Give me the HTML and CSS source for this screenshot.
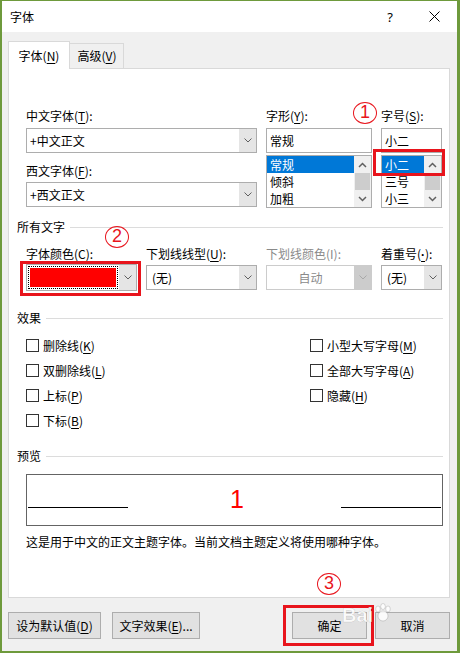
FILE: index.html
```html
<!DOCTYPE html>
<html lang="zh-CN">
<head>
<meta charset="utf-8">
<title>字体</title>
<link rel="stylesheet" href="styles.css">
</head>
<body>
<div class="window">
  <div class="titlebar">
    <span class="title">字体</span>
    <span class="help">?</span>
    <svg class="close" width="11" height="11" viewBox="0 0 11 11"><path d="M0.5 0.5 L10.5 10.5 M10.5 0.5 L0.5 10.5" stroke="#000" stroke-width="1" fill="none"/></svg>
  </div>

  <div class="main">
    <div class="tabs">
      <div class="tab active">字体(<u>N</u>)</div>
      <div class="tab">高级(<u>V</u>)</div>
    </div>

    <div class="panel">
      <div class="fontgrid">
        <div class="col">
          <div class="field">
            <div class="lbl">中文字体(<u>T</u>):</div>
            <div class="combo"><span class="val">+中文正文</span><span class="drop"><svg width="8" height="5" viewBox="0 0 8 5"><path d="M0.5 0.5 L4 4 L7.5 0.5" fill="none" stroke="#606060"/></svg></span></div>
          </div>
          <div class="field second">
            <div class="lbl">西文字体(<u>F</u>):</div>
            <div class="combo"><span class="val">+西文正文</span><span class="drop"><svg width="8" height="5" viewBox="0 0 8 5"><path d="M0.5 0.5 L4 4 L7.5 0.5" fill="none" stroke="#606060"/></svg></span></div>
          </div>
        </div>
        <div class="col">
          <div class="lbl">字形(<u>Y</u>):</div>
          <div class="textbox">常规</div>
          <div class="list">
            <div class="items">
              <div class="item sel">常规</div>
              <div class="item">倾斜</div>
              <div class="item">加粗</div>
            </div>
            <div class="scroll">
              <span class="arrow"><svg width="9" height="6" viewBox="0 0 9 6"><path d="M1 5 L4.5 1.5 L8 5" fill="none" stroke="#606060" stroke-width="1.5"/></svg></span>
              <span class="thumb"></span>
              <span class="arrow"><svg width="9" height="6" viewBox="0 0 9 6"><path d="M1 1 L4.5 4.5 L8 1" fill="none" stroke="#606060" stroke-width="1.5"/></svg></span>
            </div>
          </div>
        </div>
        <div class="col">
          <div class="lbl">字号(<u>S</u>):</div>
          <div class="textbox">小二</div>
          <div class="list">
            <div class="items">
              <div class="item sel">小二</div>
              <div class="item">三号</div>
              <div class="item">小三</div>
            </div>
            <div class="scroll">
              <span class="arrow"><svg width="9" height="6" viewBox="0 0 9 6"><path d="M1 5 L4.5 1.5 L8 5" fill="none" stroke="#606060" stroke-width="1.5"/></svg></span>
              <span class="thumb"></span>
              <span class="arrow"><svg width="9" height="6" viewBox="0 0 9 6"><path d="M1 1 L4.5 4.5 L8 1" fill="none" stroke="#606060" stroke-width="1.5"/></svg></span>
            </div>
          </div>
        </div>
      </div>

      <div class="section">所有文字</div>
      <div class="attrgrid">
        <div class="field">
          <div class="lbl">字体颜色(<u>C</u>):</div>
          <div class="combo color">
            <span class="focus"><span class="swatch"></span></span>
            <span class="drop"><svg width="8" height="5" viewBox="0 0 8 5"><path d="M0.5 0.5 L4 4 L7.5 0.5" fill="none" stroke="#606060"/></svg></span>
          </div>
        </div>
        <div class="field">
          <div class="lbl">下划线线型(<u>U</u>):</div>
          <div class="combo"><span class="val pad">(无)</span><span class="drop"><svg width="8" height="5" viewBox="0 0 8 5"><path d="M0.5 0.5 L4 4 L7.5 0.5" fill="none" stroke="#606060"/></svg></span></div>
        </div>
        <div class="field">
          <div class="lbl disabled">下划线颜色(I):</div>
          <div class="combo off"><span class="val center">自动</span><span class="drop"><svg width="8" height="5" viewBox="0 0 8 5"><path d="M0.5 0.5 L4 4 L7.5 0.5" fill="none" stroke="#a8a8a8"/></svg></span></div>
        </div>
        <div class="field">
          <div class="lbl">着重号(<u class="dot">·</u>):</div>
          <div class="combo"><span class="val pad">(无)</span><span class="drop"><svg width="8" height="5" viewBox="0 0 8 5"><path d="M0.5 0.5 L4 4 L7.5 0.5" fill="none" stroke="#606060"/></svg></span></div>
        </div>
      </div>

      <div class="section effects-title">效果</div>
      <div class="effects">
        <div class="checks">
          <label class="check"><span class="box"></span><span>删除线(<u>K</u>)</span></label>
          <label class="check"><span class="box"></span><span>双删除线(<u>L</u>)</span></label>
          <label class="check"><span class="box"></span><span>上标(<u>P</u>)</span></label>
          <label class="check"><span class="box"></span><span>下标(<u>B</u>)</span></label>
        </div>
        <div class="checks">
          <label class="check"><span class="box"></span><span>小型大写字母(<u>M</u>)</span></label>
          <label class="check"><span class="box"></span><span>全部大写字母(<u>A</u>)</span></label>
          <label class="check"><span class="box"></span><span>隐藏(<u>H</u>)</span></label>
        </div>
      </div>

      <div class="section preview-title">预览</div>
      <div class="preview">
        <span class="rule"></span>
        <span class="sample">1</span>
        <span class="rule"></span>
      </div>
      <div class="desc">这是用于中文的正文主题字体。当前文档主题定义将使用哪种字体。</div>
    </div>

    <div class="buttons">
      <button class="btn wide">设为默认值(<u>D</u>)</button>
      <button class="btn effects-btn">文字效果(<u>E</u>)...</button>
      <button class="btn ok">确定</button>
      <button class="btn cancel">取消</button>
    </div>
  </div>

  <div class="mark mark-size"></div>
  <div class="mark mark-color"></div>
  <div class="mark mark-ok"></div>
  <div class="num num1">1</div>
  <div class="num num2">2</div>
  <div class="num num3">3</div>

  <div class="watermark">
    <span class="wm-bai">Bai</span><svg class="paw" width="20" height="20" viewBox="0 0 20 20"><g fill="rgba(255,255,255,0.85)" stroke="rgba(0,0,0,0.18)" stroke-width="0.8"><ellipse cx="5" cy="6" rx="2.3" ry="3"/><ellipse cx="10" cy="3.5" rx="2.3" ry="3"/><ellipse cx="15" cy="6" rx="2.3" ry="3"/><ellipse cx="10" cy="13" rx="5" ry="5"/></g></svg>
  </div>
</div>
</body>
</html>
```

FILE: styles.css
```css
* { box-sizing: border-box; }
html, body { margin: 0; }
body {
  width: 460px;
  height: 653px;
  overflow: hidden;
  background: #6e9a3c;
  padding: 1px 3px 2px 2px;
  font: 12px/16px "Noto Sans CJK SC", "Noto Sans", sans-serif;
  color: #000;
}
u { text-decoration: underline; text-underline-offset: 2px; }
u.dot { font-family: "Liberation Sans", sans-serif; font-weight: bold; }

.window {
  position: relative;
  height: 650px;
  background: #f0f0f0;
}

/* title bar */
.titlebar {
  height: 31px;
  background: #fff;
  display: flex;
  align-items: center;
  padding-left: 8px;
}
.title { flex: 1; }
.help {
  width: 10px;
  text-align: center;
  font: 13px/16px "Noto Sans", sans-serif;
  margin-right: 34px;
}
.close { margin-right: 17px; }

.main { padding: 9px 7px 0 6px; }

/* tabs */
.tabs {
  display: flex;
  align-items: flex-end;
  height: 28px;
  margin-bottom: -1px;
  position: relative;
  z-index: 1;
}
.tab {
  height: 25px;
  width: 54px;
  margin-bottom: 1px;
  border: 1px solid #d9d9d9;
  border-left: none;
  border-bottom: none;
  background: #f0f0f0;
  text-align: center;
  line-height: 24px;
  padding-left: 1px;
}
.tab.active {
  height: 28px;
  width: 62px;
  margin-bottom: 0;
  border-left: 1px solid #d9d9d9;
  background: #fff;
  line-height: 27px;
  padding-left: 0;
}

.panel {
  height: 530px;
  border: 1px solid #d9d9d9;
  background: #fff;
  padding: 0 6px 0 8px;
}

/* font selection grid */
.fontgrid {
  display: grid;
  grid-template-columns: 231px 106px 61px;
  column-gap: 9px;
  margin: 39px 0 0 9px;
}
.col { display: flex; flex-direction: column; }
.field { display: flex; flex-direction: column; gap: 4px; }
.field.second { margin-top: 10px; gap: 3px; }
.lbl { height: 16px; white-space: nowrap; }
.lbl.disabled { color: #8a8a8a; }

.combo {
  height: 25px;
  border: 1px solid #adadad;
  background: #fff;
  display: flex;
}
.val {
  flex: 1;
  padding-left: 3px;
  line-height: 23px;
  white-space: nowrap;
  overflow: hidden;
}
.val.pad { padding-left: 5px; }
.val.center { text-align: center; padding-left: 0; color: #8a8a8a; }
.drop {
  width: 17px;
  background: #e5e5e5;
  display: flex;
  align-items: center;
  justify-content: center;
}
.combo.off { border-color: #cccccc; }
.combo.off .drop { background: #cccccc; }

.combo.color { height: 27px; margin-top: -1px; }
.focus {
  flex: 1;
  margin: 1px;
  border: 1px dotted #000;
  padding: 1px;
  display: flex;
}
.swatch { flex: 1; background: #ff0000; }

.textbox {
  margin-top: 4px;
  height: 25px;
  border: 1px solid #adadad;
  padding-left: 3px;
  line-height: 23px;
}
.list {
  margin-top: 2px;
  height: 53px;
  border: 1px solid #adadad;
  display: flex;
}
.items { flex: 1; overflow: hidden; }
.item { height: 17px; line-height: 17px; padding-left: 3px; white-space: nowrap; }
.item.sel { background: #0078d7; color: #fff; }
.scroll {
  width: 17px;
  background: #f0f0f0;
  display: flex;
  flex-direction: column;
}
.arrow {
  height: 17px;
  display: flex;
  align-items: center;
  justify-content: center;
}
.thumb { height: 17px; margin: 0 1px; background: #cdcdcd; }

/* section headers */
.section {
  display: flex;
  align-items: center;
  height: 16px;
  margin-top: 11px;
  white-space: nowrap;
}
.section::after {
  content: "";
  flex: 1;
  height: 1px;
  background: #dcdcdc;
  margin-left: 5px;
}
.effects-title { margin-top: 19px; }
.preview-title { margin-top: 15px; }

.attrgrid {
  display: grid;
  grid-template-columns: 111px 111px 106px 61px;
  column-gap: 9px;
  margin: 11px 0 0 9px;
}
.attrgrid .field { gap: 3px; }

/* effects */
.effects {
  display: grid;
  grid-template-columns: 284px 1fr;
  margin: 7px 0 0 9px;
}
.checks { display: flex; flex-direction: column; }
.check {
  height: 25px;
  display: flex;
  align-items: center;
  gap: 4px;
  white-space: nowrap;
}
.box {
  width: 13px;
  height: 13px;
  border: 1px solid #333;
  background: #fff;
}

/* preview */
.preview {
  margin: 10px 0 0 9px;
  height: 52px;
  border: 1px solid #646464;
  display: flex;
  justify-content: space-between;
  align-items: flex-end;
  padding: 0 1px 17px 1px;
}
.rule { width: 100px; height: 1px; background: #000; }
.sample {
  color: #ff0000;
  font: 25px/25px "Liberation Sans", sans-serif;
  margin-bottom: -4px;
  margin-left: 5px;
}
.desc { margin: 8px 0 0 9px; white-space: nowrap; }

/* buttons */
.buttons { display: flex; margin-top: 14px; }
.btn {
  height: 27px;
  border: 1px solid #adadad;
  background: #e1e1e1;
  font: inherit;
  color: #000;
  padding: 0;
  white-space: nowrap;
}
.btn.wide { width: 93px; margin-right: 11px; }
.btn.effects-btn { width: 88px; }
.btn.ok { width: 75px; margin-left: auto; margin-right: 8px; }
.btn.cancel { width: 75px; }

/* annotations (overlays) */
.mark { position: absolute; border: 3px solid #e8141c; }
.mark-size { left: 371px; top: 148px; width: 72px; height: 27px; }
.mark-color { left: 18px; top: 260px; width: 121px; height: 35px; }
.mark-ok { left: 281px; top: 604px; width: 91px; height: 41px; }

.num {
  position: absolute;
  width: 24px;
  height: 22px;
  border: 1.5px solid #e8141c;
  border-radius: 50%;
  color: #e8141c;
  text-align: center;
  font: 18px/19px "Liberation Sans", sans-serif;
}
.num1 { left: 351px; top: 101px; }
.num2 { left: 103px; top: 225px; }
.num3 { left: 315px; top: 572px; }

.watermark {
  position: absolute;
  left: 340px;
  top: 602px;
  color: rgba(255,255,255,0.85);
  -webkit-text-stroke: 0.5px rgba(0,0,0,0.18);
  white-space: nowrap;
}
.wm-bai { font: bold 20px/24px "Liberation Sans", sans-serif; vertical-align: top; }
.paw { vertical-align: top; }
```
